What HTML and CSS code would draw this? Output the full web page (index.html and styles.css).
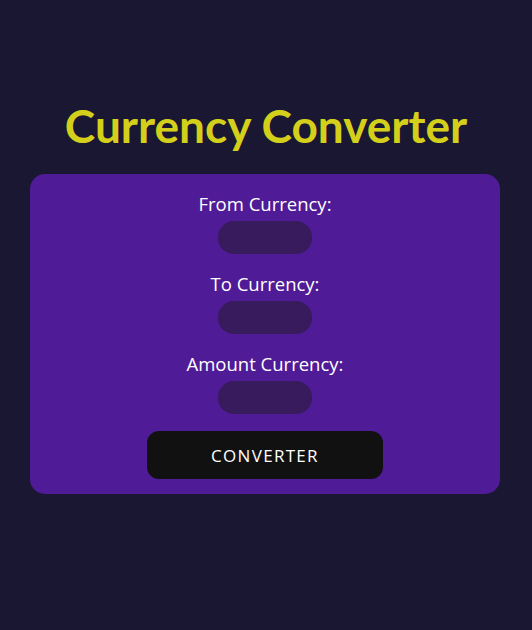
FILE: index.html
```html
<!DOCTYPE html>
<html>
<head>
<meta charset="utf-8">
<link rel="stylesheet" href="styles.css">
</head>
<body>
<div class="page">
  <h1 class="title">Currency Converter</h1>
  <div class="card">
    <div class="field">
      <label class="label">From Currency:</label>
      <input class="input" type="text">
    </div>
    <div class="field">
      <label class="label">To Currency:</label>
      <input class="input" type="text">
    </div>
    <div class="field">
      <label class="label">Amount Currency:</label>
      <input class="input" type="text">
    </div>
    <button class="btn">CONVERTER</button>
  </div>
</div>
</body>
</html>
```
FILE: styles.css
```css
html, body {
  margin: 0;
  padding: 0;
  background: #1a1733;
  height: 100%;
}
.page {
  padding-top: 96px;
  font-family: "Open Sans", "Noto Sans", sans-serif;
}
.title {
  margin: 0 0 18px;
  text-align: center;
  font-family: Lato, sans-serif;
  font-weight: 700;
  font-size: 46px;
  line-height: 60px;
  color: #d4cf1b;
}
.card {
  margin: 0 32px 0 30px;
  background: #4f1b96;
  border-radius: 15px;
  padding: 18px 0 15px;
  display: flex;
  flex-direction: column;
  align-items: center;
}
.field {
  display: flex;
  flex-direction: column;
  align-items: center;
  margin-bottom: 18px;
}
.field:last-of-type {
  margin-bottom: 17px;
}
.label {
  color: #fff;
  font-size: 18.5px;
  line-height: 24px;
  margin-bottom: 5px;
}
.input {
  width: 94px;
  height: 33px;
  box-sizing: border-box;
  border: none;
  border-radius: 16px;
  background: #371b5c;
  outline: none;
  padding: 0 10px;
}
.btn {
  width: 236px;
  height: 48px;
  border: none;
  border-radius: 12px;
  background: #111111;
  color: #fff;
  font-family: "Open Sans", sans-serif;
  font-size: 17px;
  letter-spacing: 1.3px;
}
```
